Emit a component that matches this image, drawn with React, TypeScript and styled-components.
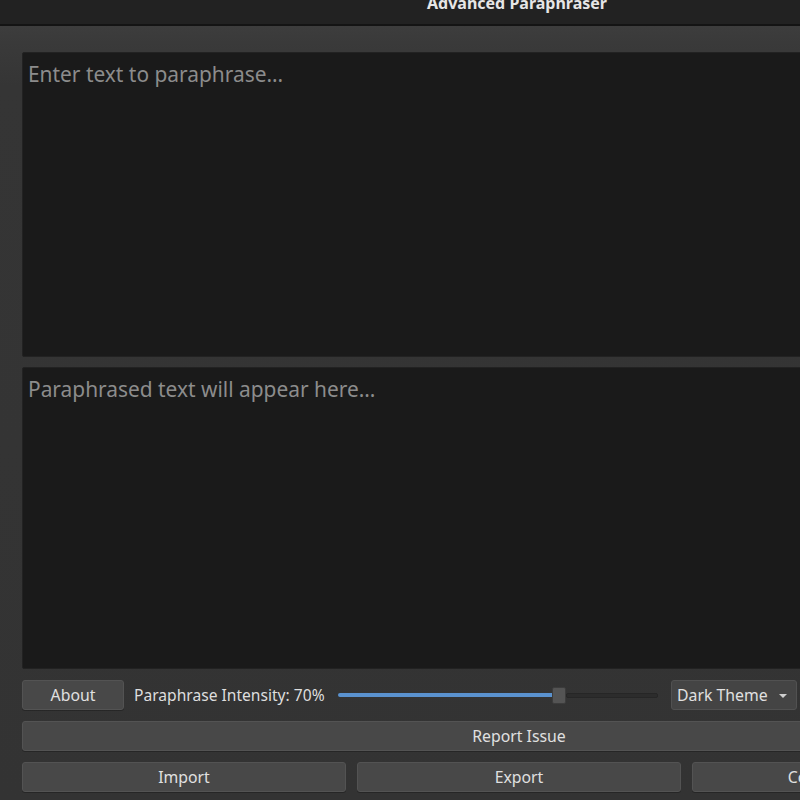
import React from "react";
import styled, { createGlobalStyle } from "styled-components";

const Global = createGlobalStyle`
  html, body { margin: 0; padding: 0; background: #2e2e2e; overflow: hidden; }
  body { width: 800px; height: 800px; }
  * { box-sizing: border-box; }
`;

const Window = styled.div`
  width: 1034px;
  height: 800px;
  display: flex;
  flex-direction: column;
  font-family: "Noto Sans", "Open Sans", sans-serif;
  background: #363636;
`;

const TitleBar = styled.div`
  height: 26px;
  flex: none;
  background: #222222;
  border-bottom: 2px solid #141414;
  display: flex;
  justify-content: center;
  align-items: flex-start;
`;

const Title = styled.div`
  font-size: 16px;
  font-weight: 700;
  line-height: 6px;
  color: #e6e6e6;
`;

const Body = styled.div`
  flex: 1;
  display: flex;
  flex-direction: column;
  gap: 11px;
  padding: 26px 18px 6px 22px;
  background: linear-gradient(#3d3d3d 0px, #3a3a3a 16px, #353535 60px, #333333 100%);
`;

const Editors = styled.div`
  display: flex;
  flex-direction: column;
  gap: 10px;
  flex: none;
`;

const TextArea = styled.textarea<{ $h: number }>`
  height: ${(p) => p.$h}px;
  flex: none;
  width: 100%;
  resize: none;
  background: #1a1a1a;
  border: 1px solid #222;
  border-radius: 2px;
  padding: 7px 5px;
  font-family: "Noto Sans", "Open Sans", sans-serif;
  font-size: 20.9px;
  color: #d0d0d0;
  outline: none;
  &::placeholder { color: #8c8c8c; }
`;

const Row = styled.div`
  display: flex;
  align-items: center;
  gap: 11px;
  height: 30px;
  flex: none;
`;

const Button = styled.button<{ $w?: number }>`
  height: 30px;
  ${(p) => (p.$w ? `width: ${p.$w}px; flex: none;` : "flex: 1;")}
  background: #484848;
  border: 1px solid #535353;
  border-radius: 3px;
  color: #e0e0e0;
  font-family: "Noto Sans", "Open Sans", sans-serif;
  font-size: 15.8px;
  padding: 0;
  white-space: nowrap;
  box-shadow: 0 1px 0 rgba(0,0,0,0.25);
`;

const Label = styled.span`
  font-size: 15.6px;
  color: #dedede;
  white-space: nowrap;
  width: 193px;
  flex: none;
  margin-left: -1px;
`;

const Slider = styled.div`
  width: 320px;
  flex: none;
  height: 18px;
  display: flex;
  align-items: center;
`;

const Fill = styled.div`
  height: 4px;
  background: #5a92cf;
  border-radius: 2px 0 0 2px;
`;

const Groove = styled.div`
  flex: 1;
  height: 5px;
  background: #2c2c2c;
  border: 1px solid #262626;
  border-radius: 2px;
`;

const Thumb = styled.div`
  width: 14px;
  height: 17px;
  flex: none;
  background: #545454;
  border: 1px solid #3c3c3c;
  border-radius: 2px;
`;

const Select = styled.div`
  width: 126px;
  height: 30px;
  flex: none;
  margin-left: 2px;
  background: #444444;
  border: 1px solid #515151;
  border-radius: 3px;
  display: flex;
  align-items: center;
  justify-content: space-between;
  padding: 0 9px 0 5px;
  color: #e0e0e0;
  font-size: 15.8px;
  white-space: nowrap;
`;

const Arrow = styled.span`
  width: 0;
  height: 0;
  border-left: 4px solid transparent;
  border-right: 4px solid transparent;
  border-top: 4px solid #cfcfcf;
  margin-top: 1px;
`;

export default function App() {
  const pct = 70;
  return (
    <>
      <Global />
      <Window>
        <TitleBar>
          <Title>Advanced Paraphraser</Title>
        </TitleBar>
        <Body>
          <Editors>
            <TextArea $h={305} placeholder="Enter text to paraphrase..." />
            <TextArea $h={302} placeholder="Paraphrased text will appear here..." readOnly />
          </Editors>
          <Row>
            <Button $w={102}>About</Button>
            <Label>Paraphrase Intensity: {pct}%</Label>
            <Slider>
              <Fill style={{ width: `${(pct / 100) * 306}px` }} />
              <Thumb />
              <Groove />
            </Slider>
            <Select>
              Dark Theme
              <Arrow />
            </Select>
            <Button>Paraphrase</Button>
          </Row>
          <Row>
            <Button>Report Issue</Button>
          </Row>
          <Row>
            <Button>Import</Button>
            <Button>Export</Button>
            <Button>Copy to Clipboard</Button>
          </Row>
        </Body>
      </Window>
    </>
  );
}
